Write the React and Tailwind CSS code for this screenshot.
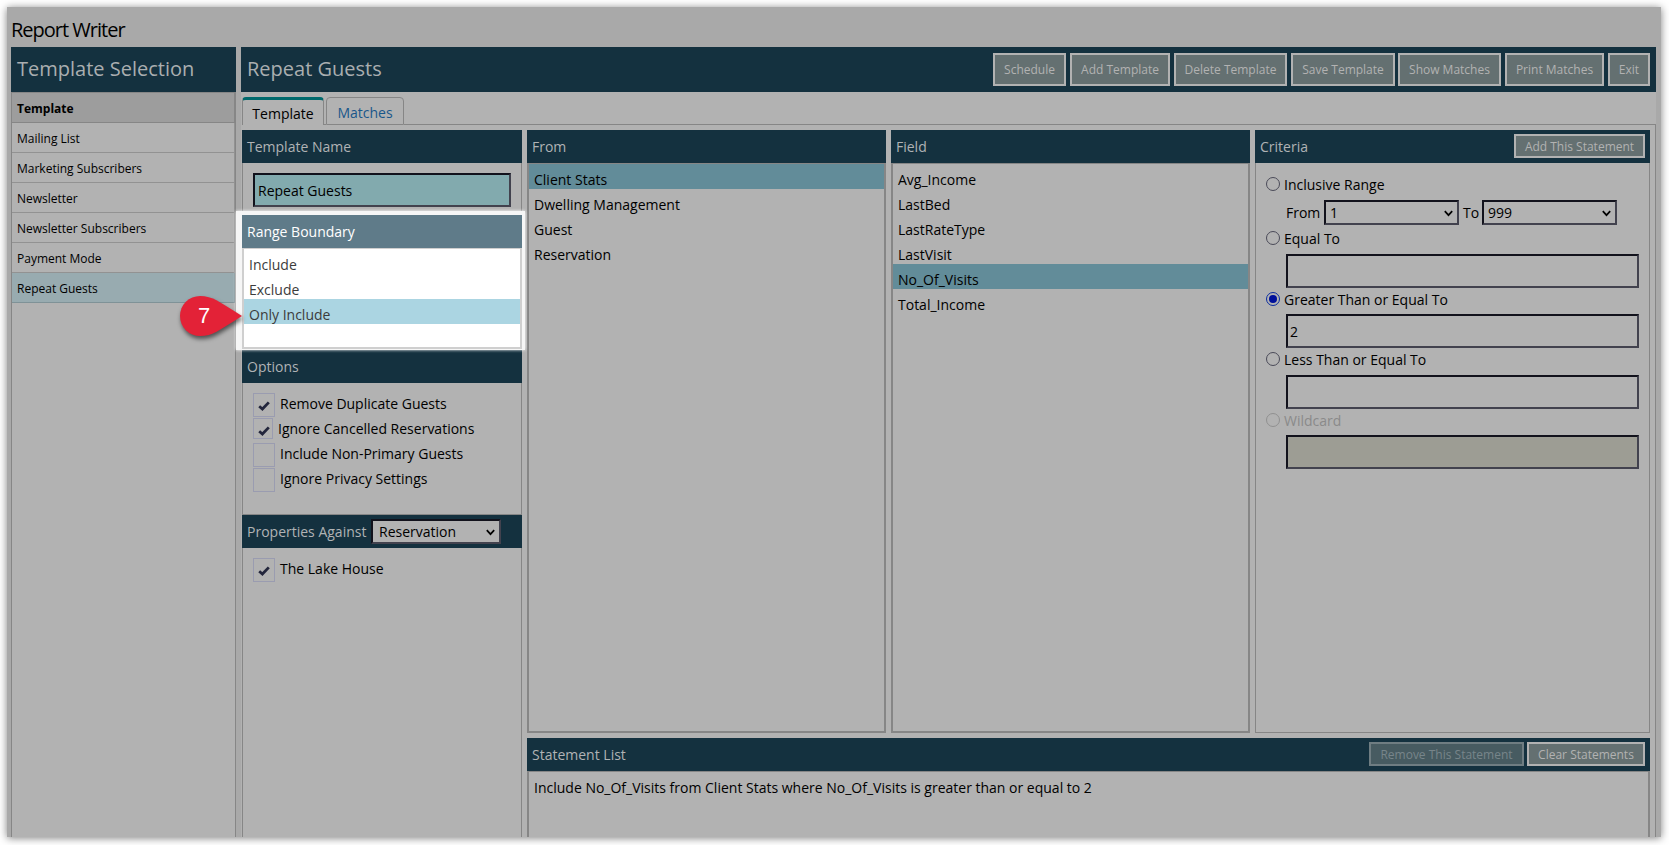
import React, { useState } from "react";
import clsx from "clsx";

const templates = [
  "Mailing List",
  "Marketing Subscribers",
  "Newsletter",
  "Newsletter Subscribers",
  "Payment Mode",
  "Repeat Guests",
];

const actions = [
  { label: "Schedule", width: "w-[73px]" },
  { label: "Add Template", width: "w-[100px]" },
  { label: "Delete Template", width: "w-[113px]" },
  { label: "Save Template", width: "w-[104px] -mr-px" },
  { label: "Show Matches", width: "w-[103px]" },
  { label: "Print Matches", width: "w-[99px]" },
  { label: "Exit", width: "w-[42px]" },
];

const sources = ["Client Stats", "Dwelling Management", "Guest", "Reservation"];

const fields = [
  "Avg_Income",
  "LastBed",
  "LastRateType",
  "LastVisit",
  "No_Of_Visits",
  "Total_Income",
];

const PanelHeader = ({ title, children }) => (
  <div className="flex h-[33px] shrink-0 items-center justify-between bg-[#14313f] pr-[5px] pl-[5px] text-[14px] text-[#b0b3b5]">
    <span>{title}</span>
    {children}
  </div>
);

const SmallButton = ({ width, disabled, children }) => (
  <button
    className={clsx(
      "-mt-px h-6 border-2 pt-[2px] text-[12px] leading-[18px] whitespace-nowrap",
      width,
      disabled
        ? "border-[#6f7d82] bg-[#475b61] text-[#77858a]"
        : "border-[#b2b2b2] bg-[#647071] text-[#b2b2b2]"
    )}
  >
    {children}
  </button>
);

const Option = ({ selected, color, onClick, children }) => (
  <li
    onClick={onClick}
    className={clsx("h-[25px] pt-[3px] pl-[5px] leading-[25px]", selected && color)}
  >
    {children}
  </li>
);

const ListPanel = ({ title, items, selected, onSelect }) => (
  <section className="flex w-[359px] flex-col">
    <PanelHeader title={title} />
    <ul className="flex-1 border-2 border-t border-[#868686]">
      {items.map((item) => (
        <Option
          key={item}
          selected={item === selected}
          color="bg-[#628c99]"
          onClick={() => onSelect(item)}
        >
          {item}
        </Option>
      ))}
    </ul>
  </section>
);

const CheckRow = ({ label, checked, small }) => (
  <div className="flex h-[25px] items-start">
    <span
      className={clsx(
        "flex border border-[#9a9cb0] pt-[7px] pl-1",
        small ? "h-[21px] w-5" : "h-6 w-[22px]"
      )}
    >
      {checked && (
        <svg className="h-[10px] w-[12px] shrink-0" viewBox="0 0 12 10">
          <path d="M1.2 5.2 4.4 8 10.8 1.4" fill="none" stroke="#23263c" strokeWidth="2.8" />
        </svg>
      )}
    </span>
    <span className="ml-[5px] leading-[22px]">{label}</span>
  </div>
);

const SelectBox = ({ value, className }) => (
  <div
    className={clsx(
      "flex h-[25px] items-center justify-between border-2 border-t-[#12121c] border-r-[#42424e] border-b-[#42424e] border-l-[#12121c] bg-[#b2b2b2] pr-[4px] text-black",
      className
    )}
  >
    <span>{value}</span>
    <svg className="mt-px h-[9px] w-[9px]" viewBox="0 0 9 9">
      <path d="M0.8 2.2 4.5 6.2 8.2 2.2" fill="none" stroke="#000" strokeWidth="1.7" />
    </svg>
  </div>
);

const Radio = ({ label, checked, disabled }) => (
  <div className={clsx("flex h-[22px] items-center", disabled && "text-[#8a8a8a]")}>
    <span
      className={clsx(
        "flex h-[14px] w-[14px] items-center justify-center rounded-full border",
        checked ? "border-[#0b2da0]" : disabled ? "border-[#909090]" : "border-[#4a4a58]"
      )}
    >
      {checked && <span className="h-2 w-2 rounded-full bg-[#00109a]" />}
    </span>
    <span className="ml-1">{label}</span>
  </div>
);

const TextBox = ({ value, className }) => (
  <div
    className={clsx(
      "h-[34px] border-2 border-t-[#12121c] border-r-[#42424e] border-b-[#42424e] border-l-[#12121c] leading-[32px]",
      className
    )}
  >
    {value}
  </div>
);

const StepPin = ({ number }) => (
  <div className="absolute top-[79px] -left-[56px] z-20 h-[50px] w-[62px]">
    <svg
      className="absolute inset-0 h-full w-full overflow-visible drop-shadow-[1px_3px_2px_rgba(0,0,0,0.55)]"
      viewBox="0 0 62 50"
    >
      <path
        d="M62 26 Q52 19.5 37 10.5 Q29 6 20 6 A20 20 0 1 0 20 46 Q29 46 37 41.5 Q52 32.5 62 26 Z"
        fill="#e32237"
      />
    </svg>
    <span className="absolute top-[12px] left-[14px] w-[20px] text-center font-['Liberation_Sans',sans-serif] text-[22px] leading-[28px] text-white">
      {number}
    </span>
  </div>
);

const App = () => {
  const [template, setTemplate] = useState("Repeat Guests");
  const [boundary, setBoundary] = useState("Only Include");
  const [source, setSource] = useState("Client Stats");
  const [field, setField] = useState("No_Of_Visits");

  return (
    <div className="h-[845px] w-[1669px] overflow-hidden bg-white p-[7px] font-['Open_Sans','Noto_Sans',sans-serif] text-[14px] text-black">
      <div className="flex h-[830px] w-[1654px] flex-col bg-[#a9a9a9] shadow-[0_1px_8px_rgba(0,0,0,0.5)]">
        <h1 className="h-10 pt-[8px] pl-[4px] text-[20px] leading-[30px] tracking-[-1px]">
          Report Writer
        </h1>

        <div className="flex min-h-0 flex-1 gap-[5px] pl-[4px]">
          <aside className="flex w-[225px] flex-col">
            <h2 className="h-[45px] shrink-0 bg-[#14313f] pl-[6px] text-[20px] leading-[43px] text-[#aaaeb0]">
              Template Selection
            </h2>
            <div className="flex-1 border-x border-t border-[#868686] bg-[#b2b2b2] text-[12px]">
              <div className="h-[30px] border-r border-b border-[#868686] bg-[#9d9d9d] pl-[5px] leading-[32px] font-bold">
                Template
              </div>
              {templates.map((name) => (
                <div
                  key={name}
                  onClick={() => setTemplate(name)}
                  className={clsx(
                    "h-[30px] border-r border-b pl-[5px] leading-[32px]",
                    name === template
                      ? "border-[#7f9297] bg-[#98abb0]"
                      : "border-[#929292]"
                  )}
                >
                  {name}
                </div>
              ))}
            </div>
          </aside>

          <main className="flex w-[1415px] flex-col bg-[#b2b2b2]">
            <header className="flex h-[45px] shrink-0 items-start justify-between bg-[#14313f] pr-[6px] pl-[6px]">
              <h2 className="text-[20px] leading-[43px] text-[#aaaeb0]">Repeat Guests</h2>
              <div className="flex gap-1 pt-[6px]">
                {actions.map((action) => (
                  <button
                    key={action.label}
                    className={clsx(
                      "h-[33px] border-2 border-[#b2b2b2] bg-[#647071] text-[12px] leading-[28px] whitespace-nowrap text-[#b2b2b2]",
                      action.width
                    )}
                  >
                    {action.label}
                  </button>
                ))}
              </div>
            </header>

            <nav className="flex h-[33px] shrink-0 items-end pl-px">
              <div className="h-[28px] w-[82px] rounded-t-[4px] border-x border-t-[3px] border-x-[#868686] border-t-[#00696c] text-center leading-[27px]">
                Template
              </div>
              <div className="h-full w-[2px] border-b border-[#868686]" />
              <div className="h-[28px] w-[78px] rounded-t-[4px] border border-[#868686] text-center leading-[30px] text-[#19578a]">
                Matches
              </div>
              <div className="h-full flex-1 border-b border-[#868686]" />
            </nav>

            <div className="flex min-h-0 flex-1 gap-[5px] border-r border-[#868686] pt-[5px] pl-px">
              <section className="flex w-[280px] flex-col">
                <PanelHeader title="Template Name" />
                <div className="h-12 border-x border-[#868686] px-[10px] pt-[10px]">
                  <TextBox value="Repeat Guests" className="bg-[#82aaae] pl-[3px]" />
                </div>

                <div className="relative z-10 -mr-[3px] -ml-[6px] h-[139px] bg-[#f6f6f6] pt-1 pr-[3px] pl-[6px] shadow-[0_0_3px_#fff]">
                  <div className="h-[33px] bg-[#5f7b89] pl-[5px] leading-[33px] text-white">
                    Range Boundary
                  </div>
                  <ul className="h-[101px] border-2 border-t border-[#cfcfcf] bg-white text-[#3c3c3c]">
                    {["Include", "Exclude", "Only Include"].map((item) => (
                      <Option
                        key={item}
                        selected={item === boundary}
                        color="bg-[#abd5e2]"
                        onClick={() => setBoundary(item)}
                      >
                        {item}
                      </Option>
                    ))}
                  </ul>
                  <StepPin number={7} />
                </div>

                <PanelHeader title="Options" />
                <div className="h-[132px] border-x border-b border-[#868686] pt-[10px] pl-[10px]">
                  <CheckRow label="Remove Duplicate Guests" checked />
                  <CheckRow label="Ignore Cancelled Reservations" checked small />
                  <CheckRow label="Include Non-Primary Guests" />
                  <CheckRow label="Ignore Privacy Settings" />
                </div>

                <div className="flex h-[33px] shrink-0 items-center bg-[#14313f] pl-[5px] text-[#b0b3b5]">
                  <span className="w-[124px]">Properties Against</span>
                  <SelectBox value="Reservation" className="w-[130px] pl-[6px]" />
                </div>
                <div className="flex-1 border-x border-[#868686] pt-[10px] pl-[10px]">
                  <CheckRow label="The Lake House" checked />
                </div>
              </section>

              <div className="flex w-[1123px] flex-col gap-[5px]">
                <div className="flex h-[603px] shrink-0 gap-[5px]">
                  <ListPanel title="From" items={sources} selected={source} onSelect={setSource} />
                  <ListPanel title="Field" items={fields} selected={field} onSelect={setField} />

                  <section className="flex w-[395px] flex-col">
                    <PanelHeader title="Criteria">
                      <SmallButton width="w-[131px]">Add This Statement</SmallButton>
                    </PanelHeader>
                    <div className="flex-1 border-x border-b border-[#868686] pt-[10px] pr-[10px] pl-[10px]">
                      <Radio label="Inclusive Range" />
                      <div className="mt-[5px] flex h-[25px] items-center pl-5">
                        <span className="w-[38px]">From</span>
                        <SelectBox value="1" className="w-[135px] pl-[4px]" />
                        <span className="w-[23px] pl-1">To</span>
                        <SelectBox value="999" className="w-[135px] pl-[4px]" />
                      </div>
                      <div className="mt-[2px]">
                        <Radio label="Equal To" />
                        <TextBox className="mt-[5px] ml-5" />
                      </div>
                      <Radio label="Greater Than or Equal To" checked />
                      <TextBox value="2" className="mt-[4px] ml-5 pl-[2px]" />
                      <Radio label="Less Than or Equal To" />
                      <TextBox className="mt-[5px] ml-5" />
                      <Radio label="Wildcard" disabled />
                      <TextBox className="mt-[4px] ml-5 bg-[#9d9d94]" />
                    </div>
                  </section>
                </div>

                <section className="flex min-h-0 flex-1 flex-col">
                  <PanelHeader title="Statement List">
                    <div className="flex gap-[3px]">
                      <SmallButton width="w-[155px]" disabled>
                        Remove This Statement
                      </SmallButton>
                      <SmallButton width="w-[118px]">Clear Statements</SmallButton>
                    </div>
                  </PanelHeader>
                  <div className="flex-1 border-x-2 border-t border-[#868686] pt-[3px] pl-[5px] leading-[25px]">
                    Include No_Of_Visits from Client Stats where No_Of_Visits is greater than or
                    equal to 2
                  </div>
                </section>
              </div>
            </div>
          </main>
        </div>
      </div>
    </div>
  );
};

export default App;
